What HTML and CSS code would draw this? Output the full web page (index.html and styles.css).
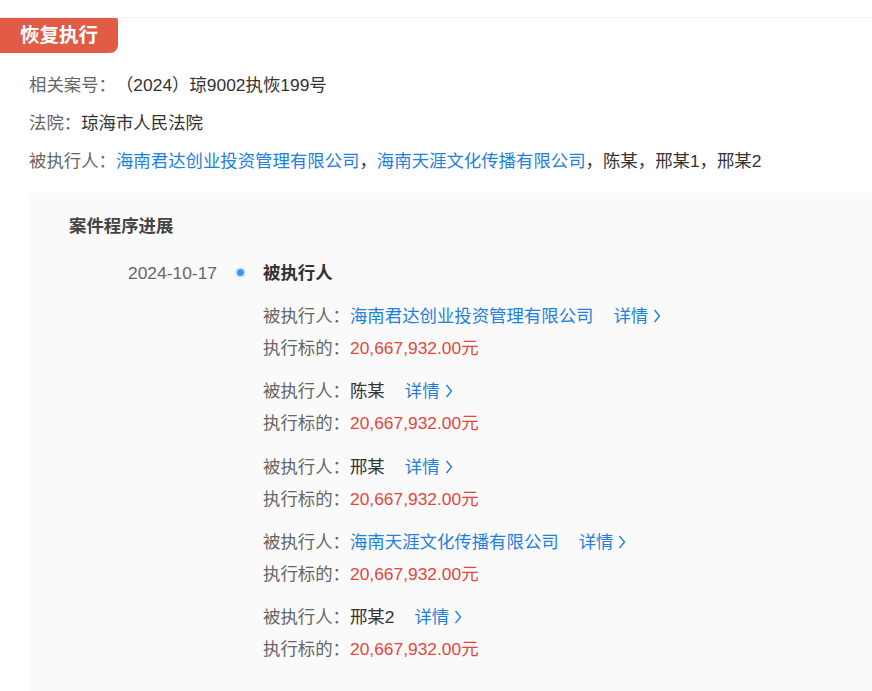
FILE: index.html
```html
<!DOCTYPE html>
<html lang="zh-CN">
<head>
<meta charset="utf-8">
<title>恢复执行</title>
<link rel="stylesheet" href="styles.css">
</head>
<body>
<div class="page">
  <div class="section">
    <div class="tag">恢复执行</div>
    <div class="info">
      <div class="line"><span class="label">相关案号：</span><span class="val">（2024）琼9002执恢199号</span></div>
      <div class="line"><span class="label">法院：</span><span class="val">琼海市人民法院</span></div>
      <div class="line"><span class="label">被执行人：</span><span class="link">海南君达创业投资管理有限公司</span><span class="val">，</span><span class="link">海南天涯文化传播有限公司</span><span class="val">，陈某，邢某1，邢某2</span></div>
    </div>
    <div class="panel">
      <div class="panel-title">案件程序进展</div>
      <div class="timeline">
        <div class="date">2024-10-17</div>
        <div class="dot-col"><span class="dot"></span></div>
        <div class="content">
          <div class="event-title">被执行人</div>
          <div class="group">
            <div class="row"><span class="label">被执行人：</span><span class="link">海南君达创业投资管理有限公司</span><span class="detail">详情<svg class="chev" viewBox="0 0 8 14" width="8" height="14"><path d="M1.5 1 L6.5 7 L1.5 13" fill="none" stroke="currentColor" stroke-width="1.4"/></svg></span></div>
            <div class="row"><span class="label">执行标的：</span><span class="amount">20,667,932.00元</span></div>
          </div>
          <div class="group">
            <div class="row"><span class="label">被执行人：</span><span class="val">陈某</span><span class="detail">详情<svg class="chev" viewBox="0 0 8 14" width="8" height="14"><path d="M1.5 1 L6.5 7 L1.5 13" fill="none" stroke="currentColor" stroke-width="1.4"/></svg></span></div>
            <div class="row"><span class="label">执行标的：</span><span class="amount">20,667,932.00元</span></div>
          </div>
          <div class="group">
            <div class="row"><span class="label">被执行人：</span><span class="val">邢某</span><span class="detail">详情<svg class="chev" viewBox="0 0 8 14" width="8" height="14"><path d="M1.5 1 L6.5 7 L1.5 13" fill="none" stroke="currentColor" stroke-width="1.4"/></svg></span></div>
            <div class="row"><span class="label">执行标的：</span><span class="amount">20,667,932.00元</span></div>
          </div>
          <div class="group">
            <div class="row"><span class="label">被执行人：</span><span class="link">海南天涯文化传播有限公司</span><span class="detail">详情<svg class="chev" viewBox="0 0 8 14" width="8" height="14"><path d="M1.5 1 L6.5 7 L1.5 13" fill="none" stroke="currentColor" stroke-width="1.4"/></svg></span></div>
            <div class="row"><span class="label">执行标的：</span><span class="amount">20,667,932.00元</span></div>
          </div>
          <div class="group">
            <div class="row"><span class="label">被执行人：</span><span class="val">邢某2</span><span class="detail">详情<svg class="chev" viewBox="0 0 8 14" width="8" height="14"><path d="M1.5 1 L6.5 7 L1.5 13" fill="none" stroke="currentColor" stroke-width="1.4"/></svg></span></div>
            <div class="row"><span class="label">执行标的：</span><span class="amount">20,667,932.00元</span></div>
          </div>
        </div>
      </div>
    </div>
  </div>
</div>
</body>
</html>
```

FILE: styles.css
```css
html, body {
  margin: 0;
  padding: 0;
  background: #ffffff;
}
body {
  font-family: "Liberation Sans", "Noto Sans CJK SC", sans-serif;
  font-size: 17.4px;
  color: #333333;
  overflow: hidden;
  text-spacing-trim: space-all;
}
.page {
  padding-top: 17px;
}
.section {
  border-top: 1px solid #eeeeee;
}
.tag {
  display: inline-block;
  height: 35px;
  line-height: 35px;
  padding: 0 20px;
  background: #e15b47;
  color: #ffffff;
  font-size: 19.5px;
  font-weight: 700;
  border-radius: 0 2px 8px 0;
  vertical-align: top;
}
.info {
  padding: 20px 0 0 29px;
}
.line {
  line-height: 24px;
  margin-bottom: 14px;
  white-space: nowrap;
}
.line:last-child {
  margin-bottom: 0;
}
.label {
  color: #666666;
}
.val {
  color: #333333;
}
.link {
  color: #1f80dd;
}
.amount {
  color: #e5453d;
}
.panel {
  margin: 20px 0 0 29px;
  background: #fafafa;
  padding: 21px 0 40px 40px;
}
.panel-title {
  font-weight: 700;
  color: #444444;
  line-height: 24px;
}
.timeline {
  display: flex;
  margin-top: 19px;
}
.date {
  width: 148px;
  text-align: right;
  color: #666666;
  line-height: 32px;
  flex: none;
}
.dot-col {
  width: 46px;
  flex: none;
  display: flex;
  justify-content: center;
  padding-top: 10px;
  height: 22px;
  box-sizing: content-box;
}
.dot {
  display: block;
  width: 7px;
  height: 7px;
  border-radius: 50%;
  background: #3a95f6;
  border: 2px solid #d3e7fd;
}
.content {
  flex: 1;
}
.event-title {
  font-weight: 700;
  color: #333333;
  line-height: 32px;
  margin-bottom: 11px;
}
.group {
  margin-bottom: 11.25px;
}
.row {
  line-height: 32px;
  white-space: nowrap;
}
.detail {
  color: #1f80dd;
  margin-left: 20px;
}
.chev {
  margin-left: 5px;
  vertical-align: -1px;
}
```
